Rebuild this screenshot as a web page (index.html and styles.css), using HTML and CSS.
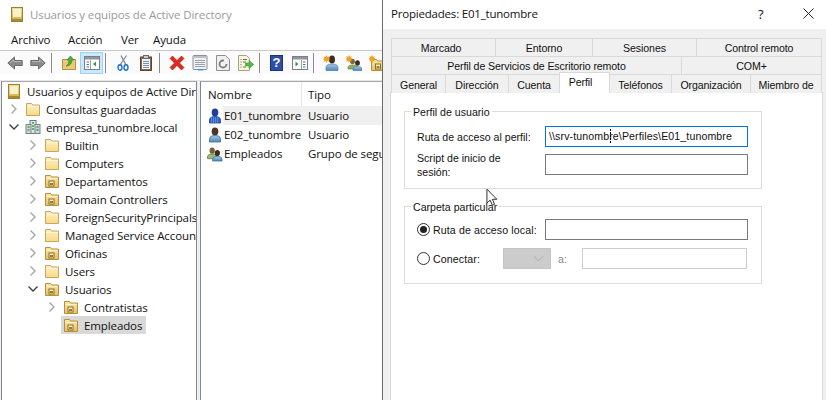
FILE: index.html
```html
<!DOCTYPE html>
<html lang="es">
<head>
<meta charset="utf-8">
<title>Usuarios y equipos de Active Directory</title>
<link rel="stylesheet" href="styles.css">
</head>
<body>
<svg class="defs" aria-hidden="true">
  <defs>
    <linearGradient id="gBook" x1="0" y1="0" x2="0" y2="1"><stop offset="0" stop-color="#efe08f"/><stop offset="1" stop-color="#d2b044"/></linearGradient>
    <linearGradient id="gFold" x1="0" y1="0" x2="0" y2="1"><stop offset="0" stop-color="#fff1c4"/><stop offset="1" stop-color="#f8d987"/></linearGradient>
    <linearGradient id="gOu" x1="0" y1="0" x2="0" y2="1"><stop offset="0" stop-color="#fbe8ab"/><stop offset="1" stop-color="#e8bf60"/></linearGradient>
    <linearGradient id="gBody" x1="0" y1="0" x2="0" y2="1"><stop offset="0" stop-color="#a9cbe6"/><stop offset="1" stop-color="#4f86b8"/></linearGradient>
    <symbol id="i-book" viewBox="0 0 12 15">
      <rect x=".5" y=".5" width="11" height="14" fill="url(#gBook)" stroke="#97803a"/>
      <rect x="2" y="2" width="8" height="8" fill="#f9f2c8"/>
      <rect x="1" y="12" width="10" height="2" fill="#a8892c"/>
    </symbol>
    <symbol id="i-folder" viewBox="0 0 16 16">
      <path d="M1.500 14.500V2.500h5l1.200 1.500h6.800v10.500z" fill="url(#gFold)" stroke="#c9a65b"/>
      <path d="M2.500 5.500h11" stroke="#fff8e0"/>
    </symbol>
    <symbol id="i-ou" viewBox="0 0 16 16">
      <path d="M1.500 14.500V2.500h5l1.200 1.500h6.800v10.500z" fill="url(#gOu)" stroke="#b58f3f"/>
      <path d="M2.500 5.500h11" stroke="#fff3c8"/>
      <rect x="5" y="8" width="5" height="5" fill="#fff6d8" stroke="#8a6f24"/>
      <rect x="6" y="10" width="3" height="2" fill="#9b7c22"/>
    </symbol>
    <symbol id="i-domain" viewBox="0 0 16 16">
      <rect x="5" y="1.500" width="6" height="13" fill="#dfe6e6" stroke="#6f7a7a"/>
      <rect x="1" y="5.500" width="5" height="9" fill="#cfd8d8" stroke="#7a8585"/>
      <rect x="10" y="5.500" width="5" height="9" fill="#cfd8d8" stroke="#7a8585"/>
      <path d="M7 4h2M7 7h2M7 10h2M2.500 8h2M2.500 11h2M11.500 8h2M11.500 11h2" stroke="#3f9a55" stroke-width="1.400"/>
    </symbol>
    <symbol id="i-user" viewBox="0 0 14 16">
      <ellipse cx="7" cy="4.500" rx="3.300" ry="4" fill="#4a3526"/>
      <path d="M1.500 15v-3c0-2.500 2.500-3.500 5.500-3.500s5.500 1 5.500 3.500v3z" fill="url(#gBody)" stroke="#3f6d99" stroke-width=".8"/>
    </symbol>
    <symbol id="i-usersel" viewBox="0 0 14 16">
      <ellipse cx="7" cy="4.500" rx="3.300" ry="4" fill="#1c3f9e"/>
      <path d="M1.500 15v-3c0-2.500 2.500-3.500 5.500-3.500s5.500 1 5.500 3.500v3z" fill="#2f63c4" stroke="#1c3f9e" stroke-width=".8"/>
      <path d="M3 10h8M3 12h8M3 14h8" stroke="#8fb0e8" stroke-dasharray="1 1"/>
    </symbol>
    <symbol id="i-group" viewBox="0 0 17 16">
      <ellipse cx="5.500" cy="4.500" rx="2.800" ry="3.300" fill="#7b5f36"/>
      <path d="M.5 13v-2c0-2 2.200-3 5-3s5 1 5 3v2z" fill="#9dbb72" stroke="#5f7f3f" stroke-width=".8"/>
      <ellipse cx="11" cy="7" rx="2.800" ry="3.300" fill="#3e2e22"/>
      <path d="M6 15.500v-2c0-2 2.200-3 5-3s5 1 5 3v2z" fill="url(#gBody)" stroke="#3f6d99" stroke-width=".8"/>
    </symbol>
    <symbol id="i-back" viewBox="0 0 16 14">
      <path d="M.8 7 7.500 1v3.500h7.700v5H7.500V13z" fill="#8b8b8b" stroke="#6a6a6a"/>
      <path d="M3 7l3.500-3v1.500h7.500" fill="none" stroke="#b5b5b5"/>
    </symbol>
    <symbol id="i-forward" viewBox="0 0 16 14">
      <path d="M15.200 7 8.500 1v3.500H.8v5h7.700V13z" fill="#8b8b8b" stroke="#6a6a6a"/>
      <path d="M2 5.500h7.500V4l3.500 3" fill="none" stroke="#b5b5b5"/>
    </symbol>
    <symbol id="i-up" viewBox="0 0 16 16">
      <path d="M1.500 14.500V4.500h13v10z" fill="#ecc976" stroke="#b0904a"/>
      <path d="M5 11c2-1 3-3 3-6H6l3.500-4L13 5h-2c0 3-2 6-6 6z" fill="#4fae3a" stroke="#2f7f22" stroke-width=".6"/>
    </symbol>
    <symbol id="i-win-left" viewBox="0 0 16 14">
      <rect x=".5" y=".5" width="15" height="13" fill="#fff" stroke="#7b7f85"/>
      <rect x="1" y="1" width="14" height="2.500" fill="#8f969c"/>
      <path d="M6.500 4v9" stroke="#9aa0a6"/>
      <path d="M2.500 6h2.500M2.500 8.500h2.500M2.500 11h2.500" stroke="#4a78b0" stroke-width="1.200"/>
      <path d="M12 5.500v5L9 8z" fill="#2f9e44"/>
    </symbol>
    <symbol id="i-win-right" viewBox="0 0 16 14">
      <rect x=".5" y=".5" width="15" height="13" fill="#fff" stroke="#7b7f85"/>
      <rect x="1" y="1" width="14" height="2.500" fill="#8f969c"/>
      <path d="M9.500 4v9" stroke="#9aa0a6"/>
      <path d="M11 6h2.500M11 8.500h2.500M11 11h2.500" stroke="#4a78b0" stroke-width="1.200"/>
      <path d="M3.500 5.500v5L6.500 8z" fill="#2f9e44"/>
    </symbol>
    <symbol id="i-cut" viewBox="0 0 12 16">
      <path d="M3 10 9.500 .5M9 10 4 .5" stroke="#7f8a94" stroke-width="1.300" fill="none"/>
      <ellipse cx="3" cy="12.500" rx="2" ry="2.700" fill="none" stroke="#1f6fd0" stroke-width="1.400"/>
      <ellipse cx="9" cy="12.500" rx="2" ry="2.700" fill="none" stroke="#1f6fd0" stroke-width="1.400"/>
    </symbol>
    <symbol id="i-paste" viewBox="0 0 12 16">
      <rect x=".5" y="2" width="11" height="13.500" fill="#8a6a4a" stroke="#5f452d"/>
      <rect x="2" y="4" width="8" height="10" fill="#f4f6fa"/>
      <rect x="3.500" y=".5" width="5" height="3" fill="#c8ccd0" stroke="#666"/>
      <path d="M3 6.500h6M3 8.500h6M3 10.500h6M3 12.500h6" stroke="#6f93bd"/>
    </symbol>
    <symbol id="i-delete" viewBox="0 0 16 16">
      <path d="M1 3.500 3.500 1 8 5.500 12.500 1 15 3.500 10.500 8 15 12.500 12.500 15 8 10.500 3.500 15 1 12.500 5.500 8z" fill="#dd2a22" stroke="#a81712" stroke-width=".6"/>
    </symbol>
    <symbol id="i-props" viewBox="0 0 16 16">
      <rect x="1" y=".5" width="14" height="14" rx="1" fill="#eef0f2" stroke="#8b9096"/>
      <rect x="1.500" y="1" width="13" height="2" fill="#b9bec4"/>
      <path d="M3 5.500h10M3 7.500h10M3 9.500h10M3 11.500h10" stroke="#9aa3ad"/>
      <rect x="6" y="14" width="5" height="1.500" fill="#3c9ad8"/>
    </symbol>
    <symbol id="i-refresh" viewBox="0 0 14 16">
      <path d="M.5 .5h9l4 4v11H.500z" fill="#f0f0f0" stroke="#8d8d8d"/>
      <circle cx="7" cy="9" r="3.500" fill="none" stroke="#7d7d7d" stroke-width="1.800" stroke-dasharray="17 5"/>
    </symbol>
    <symbol id="i-export" viewBox="0 0 16 16">
      <path d="M.5 .5h8l3 3v12H.500z" fill="#fbf5dc" stroke="#a8a08a"/>
      <path d="M2.500 4.500h1M5 4.500h4M2.500 7h1M5 7h3M2.500 9.500h1M2.500 12h1M5 12h3" stroke="#6b6b60"/>
      <path d="M7.500 8h3.500V5.500l4.700 4-4.700 4V11H7.500z" fill="#55b947" stroke="#2f8a2a" stroke-width=".5"/>
    </symbol>
    <symbol id="i-new-user" viewBox="0 0 15 16">
      <ellipse cx="8.500" cy="4.500" rx="3" ry="4" fill="#3a2c20"/>
      <path d="M2.500 15.500v-3c0-2.500 2.500-3.500 6-3.500s6 1 6 3.500v3z" fill="url(#gBody)" stroke="#3f6d99" stroke-width=".6"/>
      <path d="M3 0l.8 2 2-.7-.8 2 2 .8-2 .8.800 2-2-.8L3 8l-.8-1.900-2 .8.8-2-2-.8 2-.8-.8-2 2 .7z" fill="#f2a01e"/>
    </symbol>
    <symbol id="i-new-group" viewBox="0 0 16 16">
      <ellipse cx="6.500" cy="6.500" rx="2.400" ry="2.800" fill="#7b6a3a"/>
      <path d="M2 14v-1.500c0-1.800 2-2.500 4.500-2.500s4.500.7 4.500 2.500V14z" fill="#8fb05e" stroke="#5f7f3f" stroke-width=".6"/>
      <ellipse cx="11.500" cy="8" rx="2.400" ry="2.800" fill="#3a2c20"/>
      <path d="M7 15.500V14c0-1.800 2-2.500 4.500-2.500S16 12.200 16 14v1.500z" fill="url(#gBody)" stroke="#3f6d99" stroke-width=".6"/>
      <path d="M3 0l.8 1.800 1.900-.6-.7 1.900 1.900.8-1.900.8.700 1.900-1.900-.7L3 7.700l-.8-1.800-1.900.7.7-1.900-1.900-.8 1.900-.8-.7-1.900 1.900.6z" fill="#f2a01e"/>
    </symbol>
    <symbol id="i-new-ou" viewBox="0 0 16 16">
      <path d="M2.500 15.500v-11h5l1 1.500h7v9.500z" fill="url(#gOu)" stroke="#b58f3f"/>
      <rect x="6.500" y="9" width="5" height="5" fill="#fff6d8" stroke="#8a6f24"/>
      <rect x="7.500" y="11" width="3" height="2" fill="#9b7c22"/>
      <path d="M3 0l.8 1.800 1.900-.6-.7 1.900 1.900.8-1.900.8.700 1.900-1.900-.7L3 7.700l-.8-1.800-1.900.7.7-1.900-1.900-.8 1.900-.8-.7-1.900 1.900.6z" fill="#f2a01e"/>
    </symbol>
    <symbol id="i-chev-r" viewBox="0 0 12 12"><path d="M3.500 1.500 8 6l-4.500 4.500" fill="none" stroke="#a6a6a6" stroke-width="1.400"/></symbol>
    <symbol id="i-chev-d" viewBox="0 0 12 12"><path d="M1.500 3.500 6 8l4.500-4.500" fill="none" stroke="#404040" stroke-width="1.400"/></symbol>
  </defs>
</svg>

<div class="screen">
  <section class="mmc">
    <div class="mmc-title">
      <svg class="title-icon"><use href="#i-book"/></svg>
      <span class="mmc-title-text">Usuarios y equipos de Active Directory</span>
    </div>
    <nav class="menu">
      <span class="menu-item menu-archivo">Archivo</span>
      <span class="menu-item menu-accion">Acción</span>
      <span class="menu-item menu-ver">Ver</span>
      <span class="menu-item">Ayuda</span>
    </nav>
    <div class="toolbar">
      <span class="tb"><svg class="ic16"><use href="#i-back"/></svg></span>
      <span class="tb"><svg class="ic16"><use href="#i-forward"/></svg></span>
      <span class="tb-sep"></span>
      <span class="tb"><svg class="ic16"><use href="#i-up"/></svg></span>
      <span class="tb tb-on"><svg class="ic16"><use href="#i-win-left"/></svg></span>
      <span class="tb-sep"></span>
      <span class="tb"><svg class="ic16"><use href="#i-cut"/></svg></span>
      <span class="tb"><svg class="ic16"><use href="#i-paste"/></svg></span>
      <span class="tb-sep"></span>
      <span class="tb"><svg class="ic16"><use href="#i-delete"/></svg></span>
      <span class="tb"><svg class="ic16"><use href="#i-props"/></svg></span>
      <span class="tb"><svg class="ic16"><use href="#i-refresh"/></svg></span>
      <span class="tb"><svg class="ic16"><use href="#i-export"/></svg></span>
      <span class="tb-sep"></span>
      <span class="tb"><span class="help-ic">?</span></span>
      <span class="tb"><svg class="ic16"><use href="#i-win-right"/></svg></span>
      <span class="tb-sep"></span>
      <span class="tb"><svg class="ic16"><use href="#i-new-user"/></svg></span>
      <span class="tb"><svg class="ic16"><use href="#i-new-group"/></svg></span>
      <span class="tb"><svg class="ic16"><use href="#i-new-ou"/></svg></span>
    </div>
    <div class="panes">
      <div class="tree">
        <div class="row lv0"><svg class="root-icon"><use href="#i-book"/></svg><span class="root-label">Usuarios y equipos de Active Directory</span></div>
        <div class="row lv1"><svg class="chev"><use href="#i-chev-r"/></svg><span class="node"><svg class="ic16"><use href="#i-folder"/></svg>Consultas guardadas</span></div>
        <div class="row lv1"><svg class="chev"><use href="#i-chev-d"/></svg><span class="node"><svg class="ic16"><use href="#i-domain"/></svg>empresa_tunombre.local</span></div>
        <div class="row lv2"><svg class="chev"><use href="#i-chev-r"/></svg><span class="node"><svg class="ic16"><use href="#i-folder"/></svg>Builtin</span></div>
        <div class="row lv2"><svg class="chev"><use href="#i-chev-r"/></svg><span class="node"><svg class="ic16"><use href="#i-folder"/></svg>Computers</span></div>
        <div class="row lv2"><svg class="chev"><use href="#i-chev-r"/></svg><span class="node"><svg class="ic16"><use href="#i-ou"/></svg>Departamentos</span></div>
        <div class="row lv2"><svg class="chev"><use href="#i-chev-r"/></svg><span class="node"><svg class="ic16"><use href="#i-ou"/></svg>Domain Controllers</span></div>
        <div class="row lv2"><svg class="chev"><use href="#i-chev-r"/></svg><span class="node"><svg class="ic16"><use href="#i-folder"/></svg>ForeignSecurityPrincipals</span></div>
        <div class="row lv2"><svg class="chev"><use href="#i-chev-r"/></svg><span class="node"><svg class="ic16"><use href="#i-folder"/></svg>Managed Service Accounts</span></div>
        <div class="row lv2"><svg class="chev"><use href="#i-chev-r"/></svg><span class="node"><svg class="ic16"><use href="#i-ou"/></svg>Oficinas</span></div>
        <div class="row lv2"><svg class="chev"><use href="#i-chev-r"/></svg><span class="node"><svg class="ic16"><use href="#i-folder"/></svg>Users</span></div>
        <div class="row lv2"><svg class="chev"><use href="#i-chev-d"/></svg><span class="node"><svg class="ic16"><use href="#i-ou"/></svg>Usuarios</span></div>
        <div class="row lv3"><svg class="chev"><use href="#i-chev-r"/></svg><span class="node"><svg class="ic16"><use href="#i-ou"/></svg>Contratistas</span></div>
        <div class="row lv3"><span class="chev"></span><span class="node node-sel"><svg class="ic16"><use href="#i-ou"/></svg>Empleados</span></div>
      </div>
      <div class="split"></div>
      <div class="list">
        <div class="list-head"><span class="col-name">Nombre</span><span class="col-type">Tipo</span></div>
        <div class="list-row"><span class="col-name"><svg class="ic16"><use href="#i-usersel"/></svg><span class="cell cell-sel">E01_tunombre</span></span><span class="col-type cell-sel-rest">Usuario</span></div>
        <div class="list-row"><span class="col-name"><svg class="ic16"><use href="#i-user"/></svg><span class="cell">E02_tunombre</span></span><span class="col-type">Usuario</span></div>
        <div class="list-row"><span class="col-name"><svg class="ic16"><use href="#i-group"/></svg><span class="cell">Empleados</span></span><span class="col-type">Grupo de seguridad</span></div>
      </div>
    </div>
  </section>

  <section class="dialog">
    <header class="dlg-title">
      <span class="dlg-title-text">Propiedades: E01_tunombre</span>
      <span class="dlg-help">?</span>
      <svg class="dlg-close" viewBox="0 0 11 11"><path d="M.5 .5l10 10M10.500 .5l-10 10" stroke="#222" fill="none"/></svg>
    </header>
    <div class="dlg-body">
      <div class="tabs">
        <div class="tab-row tab-r1"><span class="tab">Marcado</span><span class="tab">Entorno</span><span class="tab">Sesiones</span><span class="tab">Control remoto</span></div>
        <div class="tab-row tab-r2"><span class="tab">Perfil de Servicios de Escritorio remoto</span><span class="tab">COM+</span></div>
        <div class="tab-row tab-r3"><span class="tab">General</span><span class="tab">Dirección</span><span class="tab">Cuenta</span><span class="tab tab-on">Perfil</span><span class="tab">Teléfonos</span><span class="tab">Organización</span><span class="tab">Miembro de</span></div>
      </div>
      <div class="panel">
        <div class="group group-profile">
          <span class="legend">Perfil de usuario</span>
          <div class="form-row">
            <span class="f-label">Ruta de acceso al perfil:</span>
            <div class="field field-focus">\\srv-tunombre\Perfiles\E01_tunombre<span class="caret"></span></div>
          </div>
          <div class="form-row">
            <span class="f-label f-label-wrap">Script de inicio de sesión:</span>
            <div class="field"></div>
          </div>
        </div>
        <div class="group group-home">
          <span class="legend">Carpeta particular</span>
          <div class="form-row">
            <span class="f-label f-radio"><span class="radio radio-on"></span>Ruta de acceso local:</span>
            <div class="field"></div>
          </div>
          <div class="form-row">
            <span class="f-radio f-radio-short"><span class="radio"></span>Conectar:</span>
            <div class="select"><svg class="sel-chev" viewBox="0 0 12 7"><path d="M1 1l5 5 5-5" fill="none" stroke="#a8a8a8"/></svg></div>
            <span class="to-label">a:</span>
            <div class="field field-off"></div>
          </div>
        </div>
      </div>
    </div>
  </section>

  <svg class="pointer" viewBox="0 0 14 20"><path d="M1 1v15l3.500-3.200 2.300 5.500 2.400-1-2.300-5.400h4.800z" fill="#fff" stroke="#222"/></svg>
</div>
</body>
</html>
```

FILE: styles.css
```css
* { box-sizing: border-box; }
html, body { margin: 0; height: 100%; background: #fff; }
body { overflow: hidden; }
.defs { position: absolute; width: 0; height: 0; }

.screen {
  position: relative;
  display: flex;
  width: 826px;
  height: 400px;
  overflow: hidden;
  font-family: "Open Sans", "Noto Sans", sans-serif;
  font-size: 11.5px;
  letter-spacing: -0.11px;
  color: #111;
}

/* left window */
.mmc { width: 382px; display: flex; flex-direction: column; flex: none; overflow: hidden; }
.mmc-title { height: 28px; display: flex; align-items: center; padding-left: 11px; }
.title-icon { width: 12px; height: 15px; margin-right: 7px; }
.mmc-title-text { color: #9a9a9a; white-space: nowrap; }
.menu { height: 22px; display: flex; align-items: center; padding-left: 11px; }
.menu-archivo { width: 57px; }
.menu-accion { width: 53px; }
.menu-ver { width: 32px; }
.toolbar {
  height: 24px;
  display: flex;
  align-items: center;
  padding-left: 3px;
  border-top: 1px solid #c8c8c8;
  background: #fbfbfb;
  flex: none;
}
.tb { width: 23px; height: 22px; flex: none; display: flex; align-items: center; justify-content: center; }
.tb-on { background: #cce8ff; border: 1px solid #99d1ff; }
.tb-sep { width: 8px; height: 20px; flex: none; position: relative; }
.tb-sep::before { content: ""; display: block; width: 1px; height: 20px; margin-left: 2px; background: #8a8a8a; }
.ic16 { width: 16px; height: 16px; flex: none; }
.help-ic {
  width: 13px; height: 16px;
  background: #2e4fa8;
  border: 1px solid #1c3278;
  color: #fff;
  font: bold 13px/14px "Liberation Sans", sans-serif;
  text-align: center;
}

.panes {
  flex: 1;
  display: flex;
  margin-top: 6px;
  padding-left: 1px;
  background: #f0f0f0;
  border-top: 1px solid #e6e6e6;
  min-height: 0;
}
.tree {
  width: 196px;
  flex: none;
  background: #fff;
  border-left: 1px solid #828790;
  border-right: 1px solid #828790;
  border-top: 1px solid #a8a8a8;
  overflow: hidden;
}
.split { width: 3px; flex: none; background: #f0f0f0; }
.row { height: 18px; display: flex; align-items: center; white-space: nowrap; }
.lv0 { padding-left: 6px; }
.lv1 { padding-left: 6px; }
.lv2 { padding-left: 25px; }
.lv3 { padding-left: 44px; }
.root-icon { width: 12px; height: 15px; margin-right: 7px; flex: none; }
.chev { width: 12px; height: 12px; margin-right: 3px; flex: none; display: block; }
.node { display: flex; align-items: center; gap: 5px; height: 18px; padding: 0 4px 0 2px; }
.node-sel { background: #d9d9d9; }

.list {
  flex: 1;
  min-width: 0;
  background: #fff;
  border-left: 1px solid #828790;
  border-top: 1px solid #a8a8a8;
  overflow: hidden;
}
.list-head { height: 24px; display: flex; align-items: center; white-space: nowrap; }
.list-head .col-name { border-right: 1px solid #e5e5e5; height: 24px; display: flex; align-items: center; padding-left: 7px; }
.col-name { width: 101px; flex: none; }
.col-type { padding-left: 6px; flex: 1; white-space: nowrap; overflow: hidden; }
.list-row { height: 19px; display: flex; align-items: center; white-space: nowrap; }
.list-row .col-name { display: flex; align-items: center; height: 19px; padding-left: 6px; }
.cell { padding-left: 1px; height: 19px; line-height: 19px; flex: 1; }
.cell-sel, .cell-sel-rest { background: #f0f0f0; height: 19px; line-height: 19px; }

/* dialog */
.dialog {
  flex: 1;
  min-width: 0;
  display: flex;
  flex-direction: column;
  border-left: 1px solid #6b6b6b;
}
.dlg-title { height: 29px; flex: none; display: flex; align-items: center; padding: 0 12px 2px 8px; background: #fff; letter-spacing: -0.2px; }
.dlg-title-text { flex: 1; }
.dlg-help { width: 45px; font-size: 13px; }
.dlg-close { width: 11px; height: 11px; }
.dlg-body {
  flex: 1;
  min-height: 0;
  background: #f0f0f0;
  padding: 9px 4px 0 7px;
  font-family: "Liberation Sans", sans-serif;
  font-size: 10.6px;
  letter-spacing: 0;
  display: flex;
  flex-direction: column;
}
.tabs { padding-left: 1px; height: 54px; flex: none; position: relative; z-index: 1; letter-spacing: -0.1px; }
.tab-row { display: grid; height: 18px; border-left: 1px solid #d9d9d9; }
.tab-r1 { grid-template-columns: 104px 97px 104px 125px; }
.tab-r1 .tab:first-child { padding-right: 5px; }
.tab-r2 { grid-template-columns: 290px 140px; }
.tab-r3 { grid-template-columns: 54px 63px 51px 50px 62px 79px 71px; }
.tab {
  display: flex;
  align-items: center;
  justify-content: center;
  white-space: nowrap;
  border-top: 1px solid #d9d9d9;
  border-right: 1px solid #d9d9d9;
  background: #f0f0f0;
  padding-top: 1px;
}
.tab-on {
  background: #fff;
  height: 21px;
  margin-top: -2px;
  padding-bottom: 3px;
  padding-right: 8px;
  border-left: 1px solid #d9d9d9;
  margin-left: -1px;
}
.panel {
  flex: 1;
  background: #fff;
  border: 1px solid #d9d9d9;
  border-bottom: 0;
  padding: 18px 0 0 13px;
  width: 433px;
  margin-left: 0;
}
.group {
  position: relative;
  width: 358px;
  height: 78px;
  border: 1px solid #dcdcdc;
  padding-left: 12px;
}
.group-profile { padding-top: 14px; margin-bottom: 17px; }
.group-home { padding-top: 12px; }
.legend {
  position: absolute;
  left: 6px;
  top: -6px;
  padding: 0 2px;
  background: #fff;
  line-height: 13px;
}
.form-row { display: flex; align-items: center; height: 21px; margin-bottom: 7px; }
.group-home .form-row { margin-bottom: 8px; }
.f-label { width: 128px; flex: none; }
.f-label-wrap { line-height: 14px; width: 128px; padding-right: 30px; }
.f-radio { display: flex; align-items: center; gap: 3px; white-space: nowrap; letter-spacing: 0.12px; }
.f-radio-short { width: 86px; flex: none; }
.radio {
  width: 13px; height: 13px;
  border: 1px solid #333;
  border-radius: 50%;
  background: #fff;
  flex: none;
  position: relative;
}
.radio-on::after {
  content: "";
  position: absolute;
  left: 2px; top: 2px;
  width: 7px; height: 7px;
  border-radius: 50%;
  background: #222;
}
.field {
  position: relative;
  width: 203px;
  height: 21px;
  flex: none;
  border: 1px solid #7a7a7a;
  background: #fff;
  padding-left: 3px;
  line-height: 18px;
  white-space: nowrap;
  letter-spacing: 0.11px;
}
.field-focus { border-color: #0078d7; }
.field-off { width: 165px; border-color: #ccc; }
.caret {
  position: absolute;
  left: 64px;
  top: 2px;
  width: 1px;
  height: 15px;
  background: repeating-linear-gradient(#000 0 2px, transparent 2px 3px);
}
.select {
  width: 48px; height: 21px; flex: none;
  background: #ccc;
  border: 1px solid #c4c4c4;
  display: flex;
  align-items: center;
  justify-content: flex-end;
  padding-right: 6px;
}
.sel-chev { width: 11px; height: 7px; }
.to-label { width: 31px; flex: none; padding-left: 7px; color: #8a8a8a; }

.pointer { position: absolute; left: 486px; top: 188px; width: 13px; height: 19px; }
```
